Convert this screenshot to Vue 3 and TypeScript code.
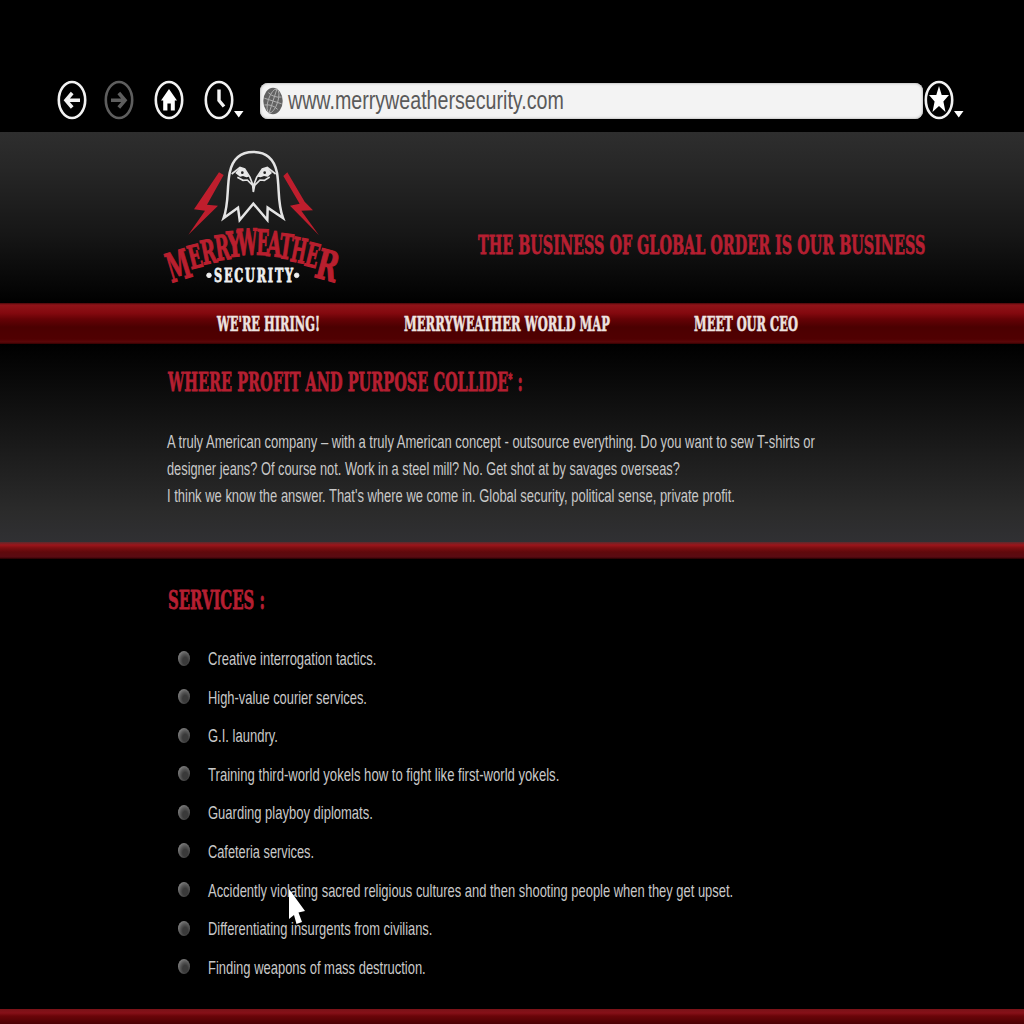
<script setup lang="ts">
import { h, type VNode } from 'vue'

interface FitProps { text: string; w: number; h: number; base: number; mark?: string; tail?: string }

// A line of text condensed to a fixed width; `mark` is a small raised sign before `tail`.
const FitText = (p: FitProps) =>
  h('svg', { width: p.w, height: p.h, style: { display: 'block', overflow: 'visible' } }, [
    h('text', {
      x: 0,
      y: p.base,
      fill: 'currentColor',
      onVnodeMounted: (v: VNode) => {
        const el = v.el as SVGTextElement
        el.setAttribute('transform', `scale(${p.w / el.getComputedTextLength()} 1)`)
      },
    }, p.mark
      ? [p.text, h('tspan', { dy: -7, style: 'font-size: 14px' }, p.mark), h('tspan', { dy: 7 }, p.tail)]
      : p.text),
  ])
FitText.props = ['text', 'w', 'h', 'base', 'mark', 'tail']

const nav = [
  { text: "WE'RE HIRING!", w: 103 },
  { text: 'MERRYWEATHER WORLD MAP', w: 206 },
  { text: 'MEET OUR CEO', w: 104 },
]

const intro = [
  { text: 'A truly American company – with a truly American concept - outsource everything. Do you want to sew T-shirts or', w: 648.5 },
  { text: 'designer jeans? Of course not. Work in a steel mill? No. Get shot at by savages overseas?', w: 513 },
  { text: "I think we know the answer. That's where we come in. Global security, political sense, private profit.", w: 568.5 },
]

const services = [
  { text: 'Creative interrogation tactics.', w: 168.5 },
  { text: 'High-value courier services.', w: 159 },
  { text: 'G.I. laundry.', w: 70 },
  { text: 'Training third-world yokels how to fight like first-world yokels.', w: 351.5 },
  { text: 'Guarding playboy diplomats.', w: 165 },
  { text: 'Cafeteria services.', w: 106 },
  { text: 'Accidently violating sacred religious cultures and then shooting people when they get upset.', w: 526 },
  { text: 'Differentiating insurgents from civilians.', w: 224.5 },
  { text: 'Finding weapons of mass destruction.', w: 218 },
]

// Arched wordmark: centre x, baseline y, width, cap height, rotation.
const arch: [string, number, number, number, number, number][] = [
  ['M', 98, 418, 70, 88, -17],
  ['E', 143, 383, 41, 70, -14],
  ['R', 182, 370, 45, 72, -11],
  ['R', 222, 359, 44, 75, -8],
  ['Y', 256, 350, 44, 77, -5],
  ['W', 293, 345, 60, 79, -2],
  ['E', 337, 345, 38, 77, 2],
  ['A', 370, 349, 44, 76, 5],
  ['T', 403, 356, 40, 75, 8],
  ['H', 440, 367, 46, 74, 11],
  ['E', 479, 380, 40, 72, 14],
  ['R', 522, 419, 66, 90, 15],
]
</script>

<template>
  <div class="page">
    <div class="toolbar">
      <svg class="icon back" width="30" height="40" viewBox="0 0 30 40">
        <ellipse cx="15" cy="20" rx="13.2" ry="18" />
        <path d="M23 20.3H10M15.2 13L9 20.3l6.2 7.2" />
      </svg>
      <svg class="icon forward" width="30" height="40" viewBox="0 0 30 40">
        <ellipse cx="15" cy="20" rx="13.2" ry="18" />
        <path d="M7 20.3h13M14.8 13L21 20.3l-6.2 7.2" />
      </svg>
      <svg class="icon home" width="30" height="40" viewBox="0 0 30 40">
        <ellipse cx="15" cy="20" rx="13.2" ry="18" />
        <path class="solid" d="M15 9L23 20.5h-2.2V30.5h-4v-7h-3.400V30.500H9.200V20.500H7z" />
      </svg>
      <svg class="icon clock" width="40" height="40" viewBox="0 0 40 40">
        <ellipse cx="15" cy="20" rx="13.2" ry="18" />
        <path class="hand" d="M15 9.500V20.500L20 26.500" />
        <path class="solid" d="M30 31h9.500l-4.750 6.500z" />
      </svg>
      <div class="address">
        <svg class="globe" width="20" height="28" viewBox="0 0 20 28">
          <ellipse cx="10" cy="14" rx="9.700" ry="13.200" fill="#626262" />
          <g fill="none" stroke="#b0b0b0" stroke-width="0.900" transform="rotate(18 10 14)">
            <path d="M10 1v26M1 14h18M3 7.500q7 3.500 14 0M3 20.500q7-3.500 14 0" />
            <ellipse cx="10" cy="14" rx="4.800" ry="12.500" />
          </g>
        </svg>
        <FitText class="url" text="www.merryweathersecurity.com" :w="276" :h="36" :base="26" />
      </div>
      <svg class="icon star" width="40" height="40" viewBox="0 0 40 40">
        <ellipse cx="15" cy="20" rx="13.200" ry="18" />
        <path class="solid" d="M15 6l2.700 9H25l-5.600 6.500L21.500 32 15 26 8.500 32l2.100-10.500L5 15h7.300z" />
        <path class="solid" d="M30 31h9.500l-4.750 6.500z" />
      </svg>
    </div>

    <header class="masthead">
      <svg class="logo" width="210" height="160" viewBox="0 0 630 480">
        <g class="bolts">
          <path d="M207 97L221 105L171 194L204 197L115 284L165 212L132 208Z" />
          <path d="M412 97L464 185L489 211L454 212L507 286L420 197L449 191L400 108Z" />
        </g>
        <g class="eagle">
          <path d="M221 234C237 190 230 145 239 98C248 54 276 36 310 36C345 36 372 54 381 98C389 145 382 190 399 234L353 203L352 240L310 191L269 240L264 203Z" stroke-width="7.500" />
          <path d="M245 102L270 82L284 87L300 112L310 138L320 112L337 87L352 82L377 102M262 112L279 121L292 120L308 136L310 156L314 136L330 120L343 121L359 111" stroke-width="5" />
          <path class="eye" d="M256 99L270 82L284 87L297 110L289 112L279 108L270 110ZM366 99L352 82L338 87L323 110L332 112L342 108L353 110Z" />
          <circle cx="277" cy="98" r="4" fill="#222" stroke="none" />
          <circle cx="344" cy="98" r="4" fill="#222" stroke="none" />
        </g>
        <g class="arch">
          <text
            v-for="(l, i) in arch" :key="i"
            :transform="`translate(${l[1]} ${l[2]}) rotate(${l[5]})`"
            :font-size="l[4] / 0.729" :x="-l[3] / 2" y="0"
            :textLength="l[3]" lengthAdjust="spacingAndGlyphs"
          >{{ l[0] }}</text>
        </g>
        <g class="security">
          <circle cx="177" cy="406" r="7" />
          <FitText x="192" y="380" text="SECURITY" :w="243" :h="50" :base="45" />
          <circle cx="440" cy="406" r="7" />
        </g>
      </svg>
      <FitText class="slab tagline" text="THE BUSINESS OF GLOBAL ORDER IS OUR BUSINESS" :w="447.500" :h="30" :base="25" />
    </header>

    <nav class="menu">
      <FitText v-for="n in nav" :key="n.text" class="menu-item" v-bind="n" :h="40" :base="28" />
    </nav>

    <section class="intro">
      <FitText class="slab" text="WHERE PROFIT AND PURPOSE COLLIDE" mark="*" tail=" :" :w="355" :h="30" :base="25" />
      <div class="copy">
        <FitText v-for="l in intro" :key="l.text" v-bind="l" :h="27" :base="18" />
      </div>
    </section>

    <div class="rule"></div>

    <section class="services">
      <FitText class="slab" text="SERVICES :" :w="97" :h="30" :base="25" />
      <ul>
        <li v-for="s in services" :key="s.text">
          <span class="bullet"></span>
          <FitText v-bind="s" :h="38.6" :base="25.200" />
        </li>
      </ul>
    </section>

    <footer class="foot"></footer>

    <svg class="cursor" width="20" height="40" viewBox="0 0 20 40">
      <path d="M1 1L17 23L10.500 24.500L14 34L8.500 36L6 27L1 31Z" />
    </svg>
  </div>
</template>

<style>
body {
  background: #000;
  overflow: hidden;
}
</style>

<style scoped>
.page {
  position: relative;
  width: 1024px;
  height: 1024px;
  overflow: hidden;
  background: #000;
  color: #c9c9c9;
  font-family: "Liberation Sans", Arial, sans-serif;
  font-size: 17.5px;
  display: flex;
  flex-direction: column;
}
.toolbar {
  height: 132px;
  box-sizing: border-box;
  padding: 80px 0 0 57px;
  display: flex;
  align-items: flex-start;
  flex: none;
}
.icon {
  flex: none;
  fill: none;
  stroke: #f2f2f2;
  stroke-width: 2.6;
}
.icon path {
  stroke-width: 3.6;
}
.icon .solid {
  fill: #fff;
  stroke: none;
}
.icon .hand {
  stroke-width: 3.4;
}
.forward {
  stroke: #5e5e5e;
  margin-left: 17px;
}
.home {
  margin-left: 20px;
}
.clock {
  margin-left: 20px;
}
.address {
  width: 663px;
  height: 36px;
  margin: 3px 0 0 16px;
  box-sizing: border-box;
  padding-left: 3px;
  border-radius: 8px;
  background: #f3f3f3;
  box-shadow: inset 0 0 2px 1px #c8c8c8;
  display: flex;
  align-items: center;
  gap: 5px;
  flex: none;
}
.url {
  color: #5a5a5a;
  font-size: 25.5px;
}
.star {
  margin-left: 1px;
}
.masthead {
  height: 171px;
  flex: none;
  display: flex;
  align-items: flex-start;
  padding-left: 150px;
  box-sizing: border-box;
  background: linear-gradient(#2e2e2e 0%, #272727 20%, #161616 60%, #030303 95%, #000 100%);
}
.logo {
  margin-top: 8px;
  flex: none;
}
.bolts {
  fill: #bf1e2d;
}
.eagle {
  fill: none;
  stroke: #e4e4e4;
  stroke-linejoin: miter;
}
.eagle .eye {
  fill: #e8e8e8;
  stroke: none;
}
.arch {
  fill: #b91f2e;
  stroke: #b91f2e;
  stroke-width: 3.5px;
  font-family: "DejaVu Serif", serif;
  font-weight: bold;
}
.security {
  fill: #efefef;
  color: #efefef;
  stroke: #efefef;
  stroke-width: 2.5px;
  font-family: "DejaVu Serif", serif;
  font-weight: bold;
  font-size: 57px;
  letter-spacing: 9px;
}
.slab {
  color: #b51f31;
  stroke: #b51f31;
  stroke-width: 0.8px;
  font-family: "DejaVu Serif", serif;
  font-weight: bold;
  font-size: 25.5px;
}
.tagline {
  margin: 97px 0 0 117.5px;
}
.menu {
  height: 41px;
  flex: none;
  box-sizing: border-box;
  padding-left: 217px;
  display: flex;
  gap: 84px;
  background: linear-gradient(#4b080b 0, #8f1318 2px, #84090f 10px, #650206 16px, #4b0001 24px, #500001 36px, #5c080a 39px, #300 41px);
}
.menu-item {
  color: #eee3e0;
  stroke: #eee3e0;
  stroke-width: 0.6px;
  font-family: "DejaVu Serif", serif;
  font-weight: bold;
  font-size: 21px;
}
.intro {
  height: 198px;
  flex: none;
  box-sizing: border-box;
  padding: 22px 0 0 168px;
  background: linear-gradient(#000, #0a0a0a 20%, #191919 50%, #2b2b2b 85%, #303033);
}
.copy {
  margin: 34px 0 0 -1px;
}
.rule {
  height: 17px;
  flex: none;
  background: linear-gradient(#5c2a2c 0, #9b151b 3px, #7c0e11 6px, #5f090c 10px, #590b12 15px, #200 17px);
}
.services {
  height: 450px;
  flex: none;
  box-sizing: border-box;
  padding: 25px 0 0 168px;
}
ul {
  list-style: none;
  margin: 26px 0 0;
  padding: 0 0 0 10px;
}
li {
  display: flex;
  height: 38.6px;
}
.bullet {
  width: 12px;
  height: 15px;
  margin: 10.5px 18px 0 0;
  border-radius: 50%;
  background: radial-gradient(ellipse at 60% 65%, #3a3a3a 0 25%, #585858 50%, #a0a0a0 95%);
}
.foot {
  flex: 1;
  background: linear-gradient(#7a1218, #861018 4px, #6a0509 7px, #4a0003);
}
.cursor {
  position: absolute;
  left: 288px;
  top: 888px;
  fill: #fff;
}
</style>
